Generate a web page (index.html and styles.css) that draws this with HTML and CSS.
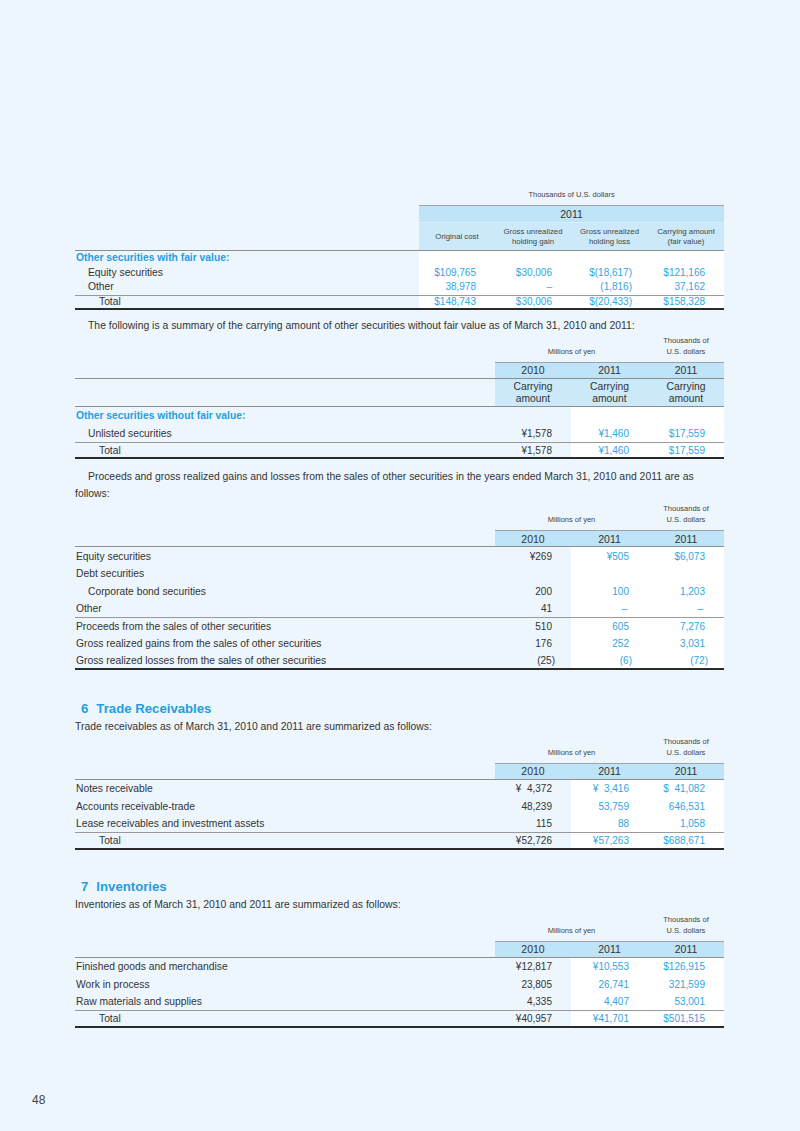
FILE: index.html
```html
<!DOCTYPE html>
<html lang="en">
<head>
<meta charset="utf-8">
<title>Notes 48</title>
<link rel="stylesheet" href="styles.css">
</head>
<body>
<div class="page">
  <div class="content">

    <table class="fin t1">
      <colgroup><col class="c-lab1"><col class="c-n"><col class="c-n"><col class="c-n2"><col class="c-n"></colgroup>
      <tr class="units"><td></td><td colspan="4" class="u-center">Thousands of U.S. dollars</td></tr>
      <tr class="yr"><td></td><th colspan="4">2011</th></tr>
      <tr class="sub"><td></td><th>Original cost</th><th>Gross unrealized<br>holding gain</th><th>Gross unrealized<br>holding loss</th><th>Carrying amount<br>(fair value)</th></tr>
      <tr class="r14"><td class="cat">Other securities with fair value:</td><td class="w"></td><td class="w"></td><td class="w"></td><td class="w"></td></tr>
      <tr class="r14"><td class="i1">Equity securities</td><td class="w num b">$109,765</td><td class="w num b">$30,006</td><td class="w num b neg">$(18,617)</td><td class="w num b">$121,166</td></tr>
      <tr class="r14"><td class="i1">Other</td><td class="w num b">38,978</td><td class="w num b">–</td><td class="w num b neg">(1,816)</td><td class="w num b">37,162</td></tr>
      <tr class="r14 sep last"><td class="i2">Total</td><td class="w num b">$148,743</td><td class="w num b">$30,006</td><td class="w num b neg">$(20,433)</td><td class="w num b">$158,328</td></tr>
    </table>

    <p class="txt indent p1">The following is a summary of the carrying amount of other securities without fair value as of March 31, 2010 and 2011:</p>

    <table class="fin">
      <colgroup><col class="c-lab"><col class="c-n"><col class="c-n2"><col class="c-n"></colgroup>
      <tr class="units"><td></td><td colspan="2" class="u-center">Millions of yen</td><td class="u-center">Thousands of<br>U.S. dollars</td></tr>
      <tr class="yr line"><td></td><th>2010</th><th>2011</th><th>2011</th></tr>
      <tr class="carry line"><td></td><th>Carrying<br>amount</th><th>Carrying<br>amount</th><th>Carrying<br>amount</th></tr>
      <tr class="r17"><td class="cat">Other securities without fair value:</td><td></td><td class="w"></td><td class="w"></td></tr>
      <tr class="r17"><td class="i1">Unlisted securities</td><td class="num">¥1,578</td><td class="w num b">¥1,460</td><td class="w num b">$17,559</td></tr>
      <tr class="r17 sep last"><td class="i2">Total</td><td class="num">¥1,578</td><td class="w num b">¥1,460</td><td class="w num b">$17,559</td></tr>
    </table>

    <p class="txt indent p2">Proceeds and gross realized gains and losses from the sales of other securities in the years ended March 31, 2010 and 2011 are as follows:</p>

    <table class="fin">
      <colgroup><col class="c-lab"><col class="c-n"><col class="c-n2"><col class="c-n"></colgroup>
      <tr class="units"><td></td><td colspan="2" class="u-center">Millions of yen</td><td class="u-center">Thousands of<br>U.S. dollars</td></tr>
      <tr class="yr line"><td></td><th>2010</th><th>2011</th><th>2011</th></tr>
      <tr class="r17"><td>Equity securities</td><td class="num">¥269</td><td class="w num b">¥505</td><td class="w num b">$6,073</td></tr>
      <tr class="r17"><td>Debt securities</td><td></td><td class="w"></td><td class="w"></td></tr>
      <tr class="r17"><td class="i1">Corporate bond securities</td><td class="num">200</td><td class="w num b">100</td><td class="w num b">1,203</td></tr>
      <tr class="r17"><td>Other</td><td class="num">41</td><td class="w num b dash">–</td><td class="w num b dash">–</td></tr>
      <tr class="r17 sep"><td>Proceeds from the sales of other securities</td><td class="num">510</td><td class="w num b">605</td><td class="w num b">7,276</td></tr>
      <tr class="r17"><td>Gross realized gains from the sales of other securities</td><td class="num">176</td><td class="w num b">252</td><td class="w num b">3,031</td></tr>
      <tr class="r17 last"><td>Gross realized losses from the sales of other securities</td><td class="num neg">(25)</td><td class="w num b neg">(6)</td><td class="w num b neg">(72)</td></tr>
    </table>

    <h2 class="sec"><span class="sec-no">6</span>Trade Receivables</h2>
    <p class="txt">Trade receivables as of March 31, 2010 and 2011 are summarized as follows:</p>

    <table class="fin">
      <colgroup><col class="c-lab"><col class="c-n"><col class="c-n2"><col class="c-n"></colgroup>
      <tr class="units"><td></td><td colspan="2" class="u-center">Millions of yen</td><td class="u-center">Thousands of<br>U.S. dollars</td></tr>
      <tr class="yr line"><td></td><th>2010</th><th>2011</th><th>2011</th></tr>
      <tr class="r17"><td>Notes receivable</td><td class="num">¥&#8199;4,372</td><td class="w num b">¥&#8199;3,416</td><td class="w num b">$&#8199;41,082</td></tr>
      <tr class="r17"><td>Accounts receivable-trade</td><td class="num">48,239</td><td class="w num b">53,759</td><td class="w num b">646,531</td></tr>
      <tr class="r17"><td>Lease receivables and investment assets</td><td class="num">115</td><td class="w num b">88</td><td class="w num b">1,058</td></tr>
      <tr class="r17 sep last"><td class="i2">Total</td><td class="num">¥52,726</td><td class="w num b">¥57,263</td><td class="w num b">$688,671</td></tr>
    </table>

    <h2 class="sec sec7"><span class="sec-no">7</span>Inventories</h2>
    <p class="txt">Inventories as of March 31, 2010 and 2011 are summarized as follows:</p>

    <table class="fin">
      <colgroup><col class="c-lab"><col class="c-n"><col class="c-n2"><col class="c-n"></colgroup>
      <tr class="units"><td></td><td colspan="2" class="u-center">Millions of yen</td><td class="u-center">Thousands of<br>U.S. dollars</td></tr>
      <tr class="yr line"><td></td><th>2010</th><th>2011</th><th>2011</th></tr>
      <tr class="r17"><td>Finished goods and merchandise</td><td class="num">¥12,817</td><td class="w num b">¥10,553</td><td class="w num b">$126,915</td></tr>
      <tr class="r17"><td>Work in process</td><td class="num">23,805</td><td class="w num b">26,741</td><td class="w num b">321,599</td></tr>
      <tr class="r17"><td>Raw materials and supplies</td><td class="num">4,335</td><td class="w num b">4,407</td><td class="w num b">53,001</td></tr>
      <tr class="r17 sep last"><td class="i2">Total</td><td class="num">¥40,957</td><td class="w num b">¥41,701</td><td class="w num b">$501,515</td></tr>
    </table>

  </div>
  <div class="folio">48</div>
</div>
</body>
</html>
```

FILE: styles.css
```css
html, body {
  margin: 0;
  padding: 0;
}
body {
  background: #eef6fd;
  font-family: "Liberation Sans", Arial, sans-serif;
  color: #333333;
  font-size: 10px;
}
.page {
  width: 800px;
  height: 1131px;
  box-sizing: border-box;
  padding: 187px 0 0 32px;
}
.content {
  width: 649px;
  margin-left: 43px;
}

/* tables */
.fin {
  width: 649px;
  border-collapse: collapse;
  table-layout: fixed;
}
.fin td, .fin th {
  padding: 0;
  font-weight: normal;
  font-size: 10.3px;
  line-height: 12px;
  white-space: nowrap;
}
.c-lab1 { width: 344px; }
.c-lab { width: 420px; }
.c-n { width: 76px; }
.c-n2 { width: 77px; }

.fin .units td {
  height: 23px;
  vertical-align: bottom;
  padding-bottom: 5px;
  font-size: 7.5px;
  line-height: 11px;
  color: #444;
}
.fin.t1 .units td { height: 13px; padding-bottom: 5px; }
.u-center { text-align: center; }

.fin .yr th {
  height: 16px;
  background: #bfe3f7;
  border-top: 1px solid #9aa4aa;
  text-align: center;
  font-size: 10.5px;
  color: #333;
}
.fin .yr.line th { height: 15px; }
.line td, .line th {
  border-bottom: 1px solid #8e8e8e;
}
.sub td, .sub th {
  height: 27px;
  border-bottom: 1px solid #8e8e8e;
}
.fin .sub th {
  background: #cbe9f9;
  border-top: 1px solid #d8eefa;
  font-size: 7.8px;
  line-height: 10px;
  text-align: center;
  color: #444;
}
.fin .carry th {
  height: 23px;
  background: #cbe9f9;
  text-align: center;
  font-size: 10.3px;
  line-height: 12.5px;
  padding-top: 2px;
}

.r14 td { height: 14.5px; }
.r14.sep.last td { height: 11.5px; }
.fin .r17 td { height: 15.5px; padding-top: 2px; }
.fin .r17.sep td { height: 14.5px; }
.fin .r17.last td { height: 13.5px; }
.fin .r17.sep.last td { height: 12.5px; }

.sep td { border-top: 1px solid #9a9a9a; }
.last td { border-bottom: 2px solid #2a2a2a; }

.fin td.cat {
  color: #23a0e0;
  font-weight: bold;
  padding-left: 1px;
}
.fin td:first-child { padding-left: 1px; }
.fin td.i1 { padding-left: 13px; }
.fin td.i2 { padding-left: 24px; }

.w { background: #ffffff; }
.fin td.num {
  text-align: right;
  padding-right: 19px;
  font-size: 10px;
}
.fin td.num.neg { padding-right: 16px; }
.fin td.num.dash { padding-right: 21px; }
.b { color: #2fa6e2; }

/* text */
.txt {
  margin: 0;
  line-height: 17px;
  font-size: 10.4px;
}
.indent { text-indent: 13px; }
.p1 { margin-top: 7px; }
.p2 { margin-top: 9px; }

.sec {
  margin: 30px 0 0 6px;
  font-size: 13.2px;
  line-height: 18px;
  font-weight: bold;
  color: #1e9fe2;
}
.sec7 { margin-top: 28px; }
.sec-no { margin-right: 8px; }

.folio {
  margin-top: 65px;
  font-size: 12px;
  line-height: 14px;
  color: #444;
}
```
